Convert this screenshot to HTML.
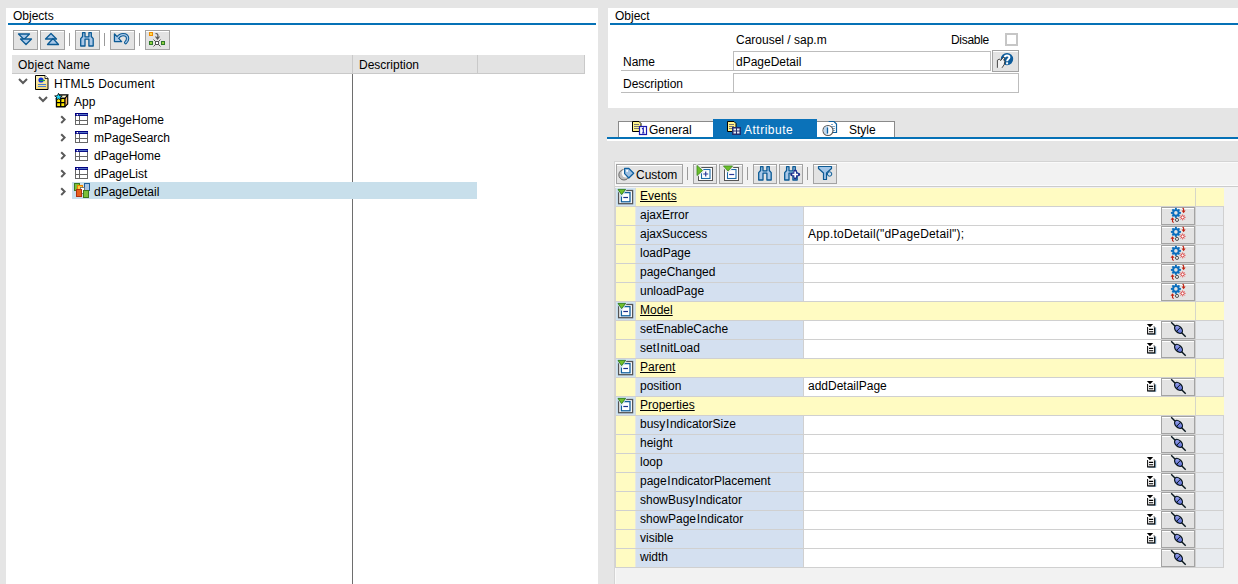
<!DOCTYPE html>
<html><head><meta charset="utf-8"><style>
html,body{margin:0;padding:0;}
body{width:1238px;height:584px;position:relative;overflow:hidden;background:#e5e5e5;font-family:"Liberation Sans",sans-serif;}
.t{position:absolute;font-size:12px;line-height:14px;white-space:nowrap;color:#000;}
.btn{position:absolute;background:#e3e3e3;border:1px solid #a3a3a3;box-shadow:inset 0 1px 0 #fff;}
svg{display:block;overflow:visible}
</style></head><body>
<div style="position:absolute;left:6px;top:8px;width:592px;height:576px;background:#fff"></div>
<div class="t" style="left:13px;top:9px;">Objects</div>
<div style="position:absolute;left:8px;top:23px;width:588px;height:2px;background:#0571b6"></div>
<div class="btn" style="left:13px;top:30px;width:23px;height:18px"><svg width="25" height="20" style="position:absolute;left:-1px;top:-1px"><g fill="#a9c8e8" stroke="#0b5a94" stroke-width="1.3" stroke-linejoin="round"><path d="M5.5 4 H16.5 L11 9.5 Z"/><path d="M7.5 9 H18.5 L13 14.5 Z"/></g></svg></div>
<div class="btn" style="left:40px;top:30px;width:23px;height:18px"><svg width="25" height="20" style="position:absolute;left:-1px;top:-1px"><g fill="#a9c8e8" stroke="#0b5a94" stroke-width="1.3" stroke-linejoin="round"><path d="M11 3.5 L16.5 9 H5.5 Z"/><path d="M13 8.5 L18.5 14.5 H7.5 Z"/></g></svg></div>
<div style="position:absolute;left:69px;top:33px;width:1px;height:13px;background:#9a9a9a"></div>
<div class="btn" style="left:75px;top:30px;width:23px;height:18px"><svg width="25" height="20" style="position:absolute;left:-1px;top:-1px"><path d="M7.6 2.7 H10 V6.8 H13.9 V2.7 H16.3 V6.5 L18.2 8.6 V16 H13.9 V9.2 H10 V16 H5.7 V8.6 L7.6 6.5 Z" fill="#a9c8e8" stroke="#0b5a94" stroke-width="1.3" stroke-linejoin="round"/></svg></div>
<div style="position:absolute;left:104px;top:33px;width:1px;height:13px;background:#9a9a9a"></div>
<div class="btn" style="left:110px;top:30px;width:23px;height:18px"><svg width="25" height="20" style="position:absolute;left:-1px;top:-1px"><path d="M7.5 8 C9.5 5 11.5 4.6 13 4.6 C16 4.6 17.6 6.2 17.6 8.5 C17.6 10.3 16.8 11.6 15.7 12.6" fill="none" stroke="#0b5a94" stroke-width="3.4" stroke-linecap="round"/><path d="M4.5 3.9 V11.6 H11.6 Z" fill="#a9c8e8" stroke="#0b5a94" stroke-width="1.4" stroke-linejoin="round"/><path d="M7.5 8 C9.5 5 11.5 4.6 13 4.6 C16 4.6 17.6 6.2 17.6 8.5 C17.6 10.3 16.8 11.6 15.7 12.6" fill="none" stroke="#a9c8e8" stroke-width="1.3" stroke-linecap="round"/><path d="M5.4 6 V10.8 H10 Z" fill="#a9c8e8"/></svg></div>
<div style="position:absolute;left:139px;top:33px;width:1px;height:13px;background:#9a9a9a"></div>
<div class="btn" style="left:145px;top:30px;width:23px;height:18px"><svg width="25" height="20" style="position:absolute;left:-1px;top:-1px"><rect x="4.5" y="2.5" width="3" height="3" fill="#ffd84a" stroke="#f08c00" stroke-width="1"/><path d="M10.5 3.5 C13 3.5 13.5 5 12.5 8" fill="none" stroke="#555" stroke-width="1.2"/><path d="M10.5 6.5 L12.5 9 L14.5 6.5" fill="none" stroke="#555" stroke-width="1.2"/><rect x="4.5" y="11.5" width="3" height="3" fill="#8fd13f" stroke="#2f7a2a" stroke-width="1"/><rect x="16.5" y="11.5" width="3" height="3" fill="#8fd13f" stroke="#2f7a2a" stroke-width="1"/><rect x="10.5" y="11.5" width="3" height="3" fill="#fff" stroke="#555" stroke-width="1"/><path d="M8.5 9.5 L10 11 M15.5 9.5 L14 11 M8.5 16.5 L10 15 M15.5 16.5 L14 15" stroke="#555" stroke-width="1"/></svg></div>
<div style="position:absolute;left:12px;top:55px;width:573px;height:18px;background:#e3e3e3"></div>
<div style="position:absolute;left:12px;top:73px;width:573px;height:1px;background:#c9c9c9"></div>
<div style="position:absolute;left:352px;top:55px;width:1px;height:18px;background:#c9c9c9"></div>
<div style="position:absolute;left:477px;top:55px;width:1px;height:18px;background:#c9c9c9"></div>
<div style="position:absolute;left:584px;top:55px;width:1px;height:19px;background:#c9c9c9"></div>
<div class="t" style="left:18px;top:58px;letter-spacing:0.2px">Object Name</div>
<div class="t" style="left:359px;top:58px;">Description</div>
<div style="position:absolute;left:352px;top:74px;width:1px;height:510px;background:#6e6e6e"></div>
<div style="position:absolute;left:72px;top:182px;width:405px;height:17px;background:#c8dfeb"></div>
<svg style="position:absolute;left:18px;top:78px" width="10" height="7"><path d="M1 1 L5 5 L9 1" fill="none" stroke="#5a5a5a" stroke-width="2"/></svg>
<div style="position:absolute;left:35px;top:75px;line-height:0"><svg width="14" height="16"><defs><linearGradient id="gy" x1="0" y1="0" x2="0" y2="1"><stop offset="0" stop-color="#fff6c0"/><stop offset="1" stop-color="#f3d77a"/></linearGradient></defs><path d="M0.5 0.5 H10 L13 3.5 V14.5 H0.5 Z" fill="url(#gy)" stroke="#000" stroke-width="1"/><path d="M10 0.5 V3.5 H13" fill="#fff" stroke="#000" stroke-width="0.8"/><circle cx="6" cy="5" r="2.6" fill="#1030e0"/><path d="M5 5.5 H10" stroke="#20a040" stroke-width="1.2"/><path d="M3 9.5 H11 M3 11.5 H11" stroke="#4a7fd0" stroke-width="1"/></svg></div>
<div class="t" style="left:54px;top:77px;letter-spacing:0.25px">HTML5 Document</div>
<svg style="position:absolute;left:38px;top:96px" width="10" height="7"><path d="M1 1 L5 5 L9 1" fill="none" stroke="#5a5a5a" stroke-width="2"/></svg>
<div style="position:absolute;left:54px;top:93px;line-height:0"><svg width="16" height="16"><path d="M2.5 5.4 L5.3 2 H13.7 V11 L10.9 13.7 H2.5 Z" fill="#f5b060" stroke="#000" stroke-width="1.1"/><path d="M2.5 5.4 L5.3 2 H13.7 L10.9 5.4 Z" fill="#fff8d0" stroke="#000" stroke-width="1.1"/><rect x="2.5" y="5.4" width="8.4" height="8.3" fill="#ffe800" stroke="#000" stroke-width="1.3"/><path d="M6.7 5.4 V13.7 M2.5 9.55 H10.9" stroke="#000" stroke-width="1.3"/><path d="M4.5 0.3 L5.6 2.7 L8.3 2.9 L6.2 4.6 L6.9 7.2 L4.5 5.8 L2.1 7.2 L2.8 4.6 L0.7 2.9 L3.4 2.7 Z" fill="#22d8f8" stroke="#000" stroke-width="0.8"/></svg></div>
<div class="t" style="left:74px;top:95px;">App</div>
<svg style="position:absolute;left:60px;top:115px" width="7" height="10"><path d="M1.2 1.2 L4.6 4.6 L1.2 8" fill="none" stroke="#5a5a5a" stroke-width="2"/></svg>
<div style="position:absolute;left:75px;top:113px;line-height:0"><svg width="13" height="12"><rect x="0.5" y="0.5" width="12" height="11" fill="#fff" stroke="#666" stroke-width="1"/><rect x="0" y="0" width="13" height="3" fill="#000080"/><rect x="4" y="1.2" width="8.5" height="0.9" fill="#6a90d8"/><rect x="1.6" y="1" width="1.6" height="1.3" fill="#fff"/><path d="M4.5 3 V11.5 M0.5 7.5 H12.5" stroke="#666" stroke-width="1"/></svg></div>
<div class="t" style="left:94px;top:113px;">mPageHome</div>
<svg style="position:absolute;left:60px;top:133px" width="7" height="10"><path d="M1.2 1.2 L4.6 4.6 L1.2 8" fill="none" stroke="#5a5a5a" stroke-width="2"/></svg>
<div style="position:absolute;left:75px;top:131px;line-height:0"><svg width="13" height="12"><rect x="0.5" y="0.5" width="12" height="11" fill="#fff" stroke="#666" stroke-width="1"/><rect x="0" y="0" width="13" height="3" fill="#000080"/><rect x="4" y="1.2" width="8.5" height="0.9" fill="#6a90d8"/><rect x="1.6" y="1" width="1.6" height="1.3" fill="#fff"/><path d="M4.5 3 V11.5 M0.5 7.5 H12.5" stroke="#666" stroke-width="1"/></svg></div>
<div class="t" style="left:94px;top:131px;">mPageSearch</div>
<svg style="position:absolute;left:60px;top:151px" width="7" height="10"><path d="M1.2 1.2 L4.6 4.6 L1.2 8" fill="none" stroke="#5a5a5a" stroke-width="2"/></svg>
<div style="position:absolute;left:75px;top:149px;line-height:0"><svg width="13" height="12"><rect x="0.5" y="0.5" width="12" height="11" fill="#fff" stroke="#666" stroke-width="1"/><rect x="0" y="0" width="13" height="3" fill="#000080"/><rect x="4" y="1.2" width="8.5" height="0.9" fill="#6a90d8"/><rect x="1.6" y="1" width="1.6" height="1.3" fill="#fff"/><path d="M4.5 3 V11.5 M0.5 7.5 H12.5" stroke="#666" stroke-width="1"/></svg></div>
<div class="t" style="left:94px;top:149px;">dPageHome</div>
<svg style="position:absolute;left:60px;top:169px" width="7" height="10"><path d="M1.2 1.2 L4.6 4.6 L1.2 8" fill="none" stroke="#5a5a5a" stroke-width="2"/></svg>
<div style="position:absolute;left:75px;top:167px;line-height:0"><svg width="13" height="12"><rect x="0.5" y="0.5" width="12" height="11" fill="#fff" stroke="#666" stroke-width="1"/><rect x="0" y="0" width="13" height="3" fill="#000080"/><rect x="4" y="1.2" width="8.5" height="0.9" fill="#6a90d8"/><rect x="1.6" y="1" width="1.6" height="1.3" fill="#fff"/><path d="M4.5 3 V11.5 M0.5 7.5 H12.5" stroke="#666" stroke-width="1"/></svg></div>
<div class="t" style="left:94px;top:167px;">dPageList</div>
<svg style="position:absolute;left:60px;top:187px" width="7" height="10"><path d="M1.2 1.2 L4.6 4.6 L1.2 8" fill="none" stroke="#5a5a5a" stroke-width="2"/></svg>
<div style="position:absolute;left:74px;top:183px;line-height:0"><svg width="17" height="16"><rect x="0.5" y="0.5" width="5" height="7" fill="#7cc03a" stroke="#3a7a20" stroke-width="1"/><rect x="10.5" y="0.5" width="5" height="7" fill="#a8c4e4" stroke="#1d5e9a" stroke-width="1"/><rect x="3.5" y="2.5" width="5" height="6" fill="#ffd040" stroke="#f08000" stroke-width="1"/><rect x="6.5" y="4.5" width="4" height="6" fill="#fff" stroke="#666" stroke-width="0.8"/><rect x="2.5" y="6.5" width="5" height="7" fill="#e8601c" stroke="#b03010" stroke-width="1"/><rect x="9.5" y="7.5" width="5" height="7" fill="#7cc03a" stroke="#3a7a20" stroke-width="1"/></svg></div>
<div class="t" style="left:94px;top:185px;">dPageDetail</div>
<div style="position:absolute;left:608px;top:8px;width:630px;height:100px;background:#fff"></div>
<div class="t" style="left:615px;top:9px;">Object</div>
<div style="position:absolute;left:610px;top:23px;width:628px;height:2px;background:#0571b6"></div>
<div class="t" style="left:736px;top:33px;">Carousel / sap.m</div>
<div class="t" style="left:951px;top:33px;letter-spacing:-0.3px">Disable</div>
<div style="position:absolute;left:1005px;top:33px;width:9px;height:9px;border:2px solid #c6c6c6;background:#fff"></div>
<div class="t" style="left:623px;top:55px;">Name</div>
<div style="position:absolute;left:621px;top:70px;width:112px;height:1px;background:#bcbcbc"></div>
<div style="position:absolute;left:733px;top:51px;width:256px;height:18px;border:1px solid #bdbdbd;background:#fff"></div>
<div class="t" style="left:736px;top:55px;">dPageDetail</div>
<div class="btn" style="left:992px;top:50px;width:25px;height:20px"><svg width="27" height="22" style="position:absolute;left:-1px;top:-1px"><circle cx="15" cy="9.1" r="6.2" fill="#0d5c9c"/><path d="M12.8 7.2 C12.8 4.9 17.4 4.7 17.4 7.2 C17.4 9 15.1 9 15.1 11.2" fill="none" stroke="#fff" stroke-width="2"/><rect x="14.1" y="12.3" width="2" height="2" fill="#fff"/><path d="M5.4 17.8 V10.2 L7.6 9 L8.6 10.6 L11.6 7 L12.6 8.3 L11.8 9.8 L12.8 11.6 L12.2 14.6 L10 17.8" fill="#f2f2f2" stroke="#333" stroke-width="0.9"/></svg></div>
<div class="t" style="left:623px;top:77px;">Description</div>
<div style="position:absolute;left:621px;top:92px;width:112px;height:1px;background:#bcbcbc"></div>
<div style="position:absolute;left:733px;top:73px;width:284px;height:18px;border:1px solid #bdbdbd;background:#fff"></div>
<div style="position:absolute;left:618px;top:121px;width:95px;height:16px;background:#fff;border-top:1px solid #8a8a8a;border-left:1px solid #8a8a8a;box-sizing:border-box"></div>
<div style="position:absolute;left:713px;top:119px;width:104px;height:18px;background:#0b72b9"></div>
<div style="position:absolute;left:817px;top:121px;width:78px;height:16px;background:#fff;border-top:1px solid #8a8a8a;border-right:1px solid #8a8a8a;box-sizing:border-box"></div>
<div style="position:absolute;left:607px;top:137px;width:631px;height:2px;background:#0571b6"></div>
<div style="position:absolute;left:607px;top:139px;width:631px;height:2px;background:#ffffff"></div>
<div style="position:absolute;left:632px;top:121px;line-height:0"><svg width="16" height="15"><path d="M0.5 0.5 H7 L9 2.5 V10.5 H0.5 Z" fill="#fff38a" stroke="#000" stroke-width="1"/><path d="M2 3.5 H7 M2 5.5 H7 M2 7.5 H7" stroke="#777" stroke-width="1"/><rect x="7.5" y="5.5" width="7" height="8" fill="#fff" stroke="#1a1ab0" stroke-width="1.2"/><path d="M10 8 L11.3 7 V12 M10 12 H12.5" stroke="#1a1ab0" stroke-width="1.1" fill="none"/></svg></div>
<div class="t" style="left:649px;top:123px;">General</div>
<div style="position:absolute;left:727px;top:121px;line-height:0"><svg width="15" height="15"><path d="M0.5 0.5 H7 L9 2.5 V10.5 H0.5 Z" fill="#fff38a" stroke="#000" stroke-width="1"/><path d="M2 3.5 H7 M2 5.5 H7 M2 7.5 H7" stroke="#777" stroke-width="1"/><rect x="5.5" y="6.5" width="8" height="7" fill="#1f2d6e" stroke="#1f2d6e" stroke-width="1"/><rect x="6.5" y="7.5" width="2.5" height="2" fill="#e8ecf4"/><rect x="10" y="7.5" width="2.5" height="2" fill="#e8ecf4"/><rect x="6.5" y="10.5" width="2.5" height="2" fill="#e8ecf4"/><rect x="10" y="10.5" width="2.5" height="2" fill="#e8ecf4"/></svg></div>
<div class="t" style="left:744px;top:123px;color:#fff;letter-spacing:0.5px">Attribute</div>
<div style="position:absolute;left:822px;top:121px;line-height:0"><svg width="17" height="16"><path d="M6.5 0.5 H12 L14.5 3 V11.5 H10" fill="#fff" stroke="#0d5f9e" stroke-width="1.2"/><path d="M9 3.5 H11 M10 5.5 H13 M10 7.5 H13 M10 9.5 H13" stroke="#6a9cc8" stroke-width="0.9"/><circle cx="6" cy="9.5" r="5" fill="#fff" stroke="#555" stroke-width="1.1"/><path d="M6 5 A4.5 4.5 0 0 0 6 14 Z" fill="#c0d8ee"/><path d="M5.5 6.5 V12.5" stroke="#0d5f9e" stroke-width="1.3"/></svg></div>
<div class="t" style="left:849px;top:123px;">Style</div>
<div style="position:absolute;left:614px;top:161px;width:624px;height:423px;background:#f2f2f2;border-top:1px solid #d4d4d4;border-left:1px solid #d4d4d4;box-sizing:border-box"></div>
<div style="position:absolute;left:615px;top:162px;width:623px;height:1px;background:#fafafa"></div>
<div style="position:absolute;left:615px;top:162px;width:1px;height:24px;background:#fafafa"></div>
<div style="position:absolute;left:615px;top:568px;width:1px;height:16px;background:#fafafa"></div>
<div style="position:absolute;left:615px;top:188px;width:1px;height:380px;background:#d2d2d2"></div>
<div class="btn" style="left:616px;top:164px;width:65px;height:18px"></div>
<div style="position:absolute;left:617px;top:167px;line-height:0"><svg width="22" height="16"><circle cx="7" cy="7.8" r="5.2" fill="#bdbdbd" stroke="#6a6a6a" stroke-width="1"/><circle cx="9" cy="6.1" r="4.4" fill="#f6f6f6"/><path d="M7.6 1.3 H11.6 L16.7 6.3 L11.8 11 L7.6 6.7 Z" fill="#9dc0e2" stroke="#0d5f9e" stroke-width="1.2" stroke-linejoin="round"/><rect x="9.2" y="3" width="1.8" height="1.8" fill="#fff"/></svg></div>
<div class="t" style="left:636px;top:168px;">Custom</div>
<div style="position:absolute;left:687px;top:167px;width:1px;height:13px;background:#9a9a9a"></div>
<div class="btn" style="left:693px;top:164px;width:22px;height:18px"><svg width="24" height="20" style="position:absolute;left:-1px;top:-1px"><rect x="5.5" y="3.5" width="14" height="13" fill="#fff" stroke="#555" stroke-width="1"/><rect x="8.5" y="5.5" width="8.5" height="9" fill="#fff" stroke="#1d6aa8" stroke-width="1.1"/><path d="M12.7 7.5 V12.5 M10.2 10 H15.2" stroke="#2a3a9a" stroke-width="1.2"/><path d="M4 1.5 L9.5 6.5 L4 11.5 Z" fill="#e3e3e3" stroke="#e3e3e3" stroke-width="3" stroke-linejoin="round"/><path d="M4 1.5 L9.5 6.5 L4 11.5 Z" fill="#6cbf2a" stroke="#3a8a1a" stroke-width="0.8"/></svg></div>
<div class="btn" style="left:719px;top:164px;width:22px;height:18px"><svg width="24" height="20" style="position:absolute;left:-1px;top:-1px"><rect x="5.5" y="3.5" width="14" height="13" fill="#fff" stroke="#555" stroke-width="1"/><rect x="8.5" y="5.5" width="8.5" height="9" fill="#fff" stroke="#1d6aa8" stroke-width="1.1"/><path d="M10.2 10.5 H15.2" stroke="#2a3a9a" stroke-width="1.2"/><path d="M4.5 2 H13.5 L9 7 Z" fill="#e3e3e3" stroke="#e3e3e3" stroke-width="3" stroke-linejoin="round"/><path d="M4.5 2 H13.5 L9 7 Z" fill="#6cbf2a" stroke="#3a8a1a" stroke-width="0.8"/></svg></div>
<div style="position:absolute;left:747px;top:167px;width:1px;height:13px;background:#9a9a9a"></div>
<div class="btn" style="left:753px;top:164px;width:22px;height:18px"><svg width="24" height="20" style="position:absolute;left:-1px;top:-1px"><path d="M7.6 2.7 H10 V6.8 H13.9 V2.7 H16.3 V6.5 L18.2 8.6 V16 H13.9 V9.2 H10 V16 H5.7 V8.6 L7.6 6.5 Z" fill="#a9c8e8" stroke="#0b5a94" stroke-width="1.3" stroke-linejoin="round"/></svg></div>
<div class="btn" style="left:779px;top:164px;width:22px;height:18px"><svg width="24" height="20" style="position:absolute;left:-1px;top:-1px"><path d="M7.6 2.7 H10 V6.8 H13.9 V2.7 H16.3 V6.5 L18.2 8.6 V16 H13.9 V9.2 H10 V16 H5.7 V8.6 L7.6 6.5 Z" fill="#a9c8e8" stroke="#0b5a94" stroke-width="1.3" stroke-linejoin="round"/><path d="M16.2 7.3 V13.7 M13 10.5 H19.4" stroke="#1a2a8a" stroke-width="3.6" stroke-linecap="round"/><path d="M16.2 7.6 V13.4 M13.3 10.5 H19.1" stroke="#fff" stroke-width="1.7"/></svg></div>
<div style="position:absolute;left:807px;top:167px;width:1px;height:13px;background:#9a9a9a"></div>
<div class="btn" style="left:813px;top:164px;width:22px;height:18px"><svg width="24" height="20" style="position:absolute;left:-1px;top:-1px"><path d="M5.5 2.5 H18.5 V4.5 L13.5 9 V15.5 H10.5 V9 L5.5 4.5 Z" fill="#a3c6e8" stroke="#0b5a94" stroke-width="1.2" stroke-linejoin="round"/><circle cx="16.6" cy="10" r="2.2" fill="#cfe0f0" stroke="#0b5a94" stroke-width="1"/></svg></div>
<div style="position:absolute;left:615px;top:185px;width:623px;height:1px;background:#fbfbfb"></div>
<div style="position:absolute;left:615px;top:186px;width:623px;height:1px;background:#cccccc"></div>
<div style="position:absolute;left:616px;top:188px;width:19px;height:18px;background:#cfe3f1"></div>
<div style="position:absolute;left:635px;top:188px;width:1px;height:18px;background:#d8dcd8"></div>
<div style="position:absolute;left:636px;top:188px;width:559px;height:18px;background:#fffbc2"></div>
<div style="position:absolute;left:1195px;top:188px;width:1px;height:18px;background:#d6d6c8"></div>
<div style="position:absolute;left:1196px;top:188px;width:28px;height:18px;background:#fffbc2"></div>
<div style="position:absolute;left:616px;top:206px;width:608px;height:1px;background:#d0d0d0"></div>
<div style="position:absolute;left:617px;top:189px;line-height:0"><svg width="18" height="17"><rect x="1.6" y="1.5" width="14" height="13.2" fill="#fff" stroke="#555" stroke-width="1.3"/><rect x="4.4" y="3.6" width="8.6" height="9.2" fill="#fff" stroke="#11609e" stroke-width="1.3"/><path d="M6.3 8.5 H11" stroke="#1a2f8a" stroke-width="1.2"/><path d="M-1 -1 H11 L4.5 8 Z" fill="#cfe3f1"/><path d="M1 0.4 H8.6 L4.6 5.6 Z" fill="#72c02a" stroke="#2e7a1a" stroke-width="0.9" stroke-linejoin="round"/></svg></div>
<div class="t" style="left:640px;top:189px;text-decoration:underline">Events</div>
<div style="position:absolute;left:616px;top:207px;width:19px;height:18px;background:#fffbc2"></div>
<div style="position:absolute;left:635px;top:207px;width:1px;height:18px;background:#e8e8e0"></div>
<div style="position:absolute;left:636px;top:207px;width:167px;height:18px;background:#d4e0f0"></div>
<div style="position:absolute;left:803px;top:207px;width:1px;height:18px;background:#d0d0d0"></div>
<div style="position:absolute;left:804px;top:207px;width:357px;height:18px;background:#fff"></div>
<div style="position:absolute;left:1195px;top:207px;width:1px;height:18px;background:#d0d0d0"></div>
<div style="position:absolute;left:1196px;top:207px;width:27px;height:18px;background:#e8ebef"></div>
<div style="position:absolute;left:1223px;top:207px;width:1px;height:19px;background:#d0d0d0"></div>
<div style="position:absolute;left:616px;top:225px;width:608px;height:1px;background:#d0d0d0"></div>
<div class="t" style="left:640px;top:208px;">ajaxError</div>
<div class="btn rb" style="left:1161px;top:207px;width:32px;height:16px"><svg width="34" height="18" style="position:absolute;left:-1px;top:-1px"><g transform="translate(14.9,5.9)"><circle r="2.75" fill="none" stroke="#0a6ebd" stroke-width="1.9"/><rect x="-0.95" y="-5" width="1.9" height="2" fill="#0a6ebd" transform="rotate(0)"/><rect x="-0.95" y="-5" width="1.9" height="2" fill="#0a6ebd" transform="rotate(45)"/><rect x="-0.95" y="-5" width="1.9" height="2" fill="#0a6ebd" transform="rotate(90)"/><rect x="-0.95" y="-5" width="1.9" height="2" fill="#0a6ebd" transform="rotate(135)"/><rect x="-0.95" y="-5" width="1.9" height="2" fill="#0a6ebd" transform="rotate(180)"/><rect x="-0.95" y="-5" width="1.9" height="2" fill="#0a6ebd" transform="rotate(225)"/><rect x="-0.95" y="-5" width="1.9" height="2" fill="#0a6ebd" transform="rotate(270)"/><rect x="-0.95" y="-5" width="1.9" height="2" fill="#0a6ebd" transform="rotate(315)"/></g><g transform="translate(21.6,10.4)"><circle r="1.6" fill="#fff" stroke="#d83030" stroke-width="1"/><path d="M0 -3 V-2 M0 2 V3 M-3 0 H-2 M2 0 H3 M-2.1 -2.1 L-1.5 -1.5 M2.1 2.1 L1.5 1.5 M-2.1 2.1 L-1.5 1.5 M2.1 -2.1 L1.5 -1.5" stroke="#e85050" stroke-width="0.9"/></g><circle cx="16" cy="12.9" r="1.6" fill="none" stroke="#555" stroke-width="1"/><path d="M21.6 0.8 L22.6 2 V4.5" fill="none" stroke="#c02010" stroke-width="1.1"/><path d="M20.6 3.6 L22.6 6.2 L24.6 3.6 Z" fill="#c02010"/><path d="M12.6 15.6 L11.5 14.5 V12" fill="none" stroke="#c02010" stroke-width="1.1"/><path d="M9.5 12.8 L11.5 10.2 L13.5 12.8 Z" fill="#c02010"/></svg></div>
<div style="position:absolute;left:616px;top:226px;width:19px;height:18px;background:#fffbc2"></div>
<div style="position:absolute;left:635px;top:226px;width:1px;height:18px;background:#e8e8e0"></div>
<div style="position:absolute;left:636px;top:226px;width:167px;height:18px;background:#d4e0f0"></div>
<div style="position:absolute;left:803px;top:226px;width:1px;height:18px;background:#d0d0d0"></div>
<div style="position:absolute;left:804px;top:226px;width:357px;height:18px;background:#fff"></div>
<div style="position:absolute;left:1195px;top:226px;width:1px;height:18px;background:#d0d0d0"></div>
<div style="position:absolute;left:1196px;top:226px;width:27px;height:18px;background:#e8ebef"></div>
<div style="position:absolute;left:1223px;top:226px;width:1px;height:19px;background:#d0d0d0"></div>
<div style="position:absolute;left:616px;top:244px;width:608px;height:1px;background:#d0d0d0"></div>
<div class="t" style="left:640px;top:227px;">ajaxSuccess</div>
<div class="t" style="left:808px;top:227px;letter-spacing:0.2px">App.toDetail("dPageDetail");</div>
<div class="btn rb" style="left:1161px;top:226px;width:32px;height:16px"><svg width="34" height="18" style="position:absolute;left:-1px;top:-1px"><g transform="translate(14.9,5.9)"><circle r="2.75" fill="none" stroke="#0a6ebd" stroke-width="1.9"/><rect x="-0.95" y="-5" width="1.9" height="2" fill="#0a6ebd" transform="rotate(0)"/><rect x="-0.95" y="-5" width="1.9" height="2" fill="#0a6ebd" transform="rotate(45)"/><rect x="-0.95" y="-5" width="1.9" height="2" fill="#0a6ebd" transform="rotate(90)"/><rect x="-0.95" y="-5" width="1.9" height="2" fill="#0a6ebd" transform="rotate(135)"/><rect x="-0.95" y="-5" width="1.9" height="2" fill="#0a6ebd" transform="rotate(180)"/><rect x="-0.95" y="-5" width="1.9" height="2" fill="#0a6ebd" transform="rotate(225)"/><rect x="-0.95" y="-5" width="1.9" height="2" fill="#0a6ebd" transform="rotate(270)"/><rect x="-0.95" y="-5" width="1.9" height="2" fill="#0a6ebd" transform="rotate(315)"/></g><g transform="translate(21.6,10.4)"><circle r="1.6" fill="#fff" stroke="#d83030" stroke-width="1"/><path d="M0 -3 V-2 M0 2 V3 M-3 0 H-2 M2 0 H3 M-2.1 -2.1 L-1.5 -1.5 M2.1 2.1 L1.5 1.5 M-2.1 2.1 L-1.5 1.5 M2.1 -2.1 L1.5 -1.5" stroke="#e85050" stroke-width="0.9"/></g><circle cx="16" cy="12.9" r="1.6" fill="none" stroke="#555" stroke-width="1"/><path d="M21.6 0.8 L22.6 2 V4.5" fill="none" stroke="#c02010" stroke-width="1.1"/><path d="M20.6 3.6 L22.6 6.2 L24.6 3.6 Z" fill="#c02010"/><path d="M12.6 15.6 L11.5 14.5 V12" fill="none" stroke="#c02010" stroke-width="1.1"/><path d="M9.5 12.8 L11.5 10.2 L13.5 12.8 Z" fill="#c02010"/></svg></div>
<div style="position:absolute;left:616px;top:245px;width:19px;height:18px;background:#fffbc2"></div>
<div style="position:absolute;left:635px;top:245px;width:1px;height:18px;background:#e8e8e0"></div>
<div style="position:absolute;left:636px;top:245px;width:167px;height:18px;background:#d4e0f0"></div>
<div style="position:absolute;left:803px;top:245px;width:1px;height:18px;background:#d0d0d0"></div>
<div style="position:absolute;left:804px;top:245px;width:357px;height:18px;background:#fff"></div>
<div style="position:absolute;left:1195px;top:245px;width:1px;height:18px;background:#d0d0d0"></div>
<div style="position:absolute;left:1196px;top:245px;width:27px;height:18px;background:#e8ebef"></div>
<div style="position:absolute;left:1223px;top:245px;width:1px;height:19px;background:#d0d0d0"></div>
<div style="position:absolute;left:616px;top:263px;width:608px;height:1px;background:#d0d0d0"></div>
<div class="t" style="left:640px;top:246px;">loadPage</div>
<div class="btn rb" style="left:1161px;top:245px;width:32px;height:16px"><svg width="34" height="18" style="position:absolute;left:-1px;top:-1px"><g transform="translate(14.9,5.9)"><circle r="2.75" fill="none" stroke="#0a6ebd" stroke-width="1.9"/><rect x="-0.95" y="-5" width="1.9" height="2" fill="#0a6ebd" transform="rotate(0)"/><rect x="-0.95" y="-5" width="1.9" height="2" fill="#0a6ebd" transform="rotate(45)"/><rect x="-0.95" y="-5" width="1.9" height="2" fill="#0a6ebd" transform="rotate(90)"/><rect x="-0.95" y="-5" width="1.9" height="2" fill="#0a6ebd" transform="rotate(135)"/><rect x="-0.95" y="-5" width="1.9" height="2" fill="#0a6ebd" transform="rotate(180)"/><rect x="-0.95" y="-5" width="1.9" height="2" fill="#0a6ebd" transform="rotate(225)"/><rect x="-0.95" y="-5" width="1.9" height="2" fill="#0a6ebd" transform="rotate(270)"/><rect x="-0.95" y="-5" width="1.9" height="2" fill="#0a6ebd" transform="rotate(315)"/></g><g transform="translate(21.6,10.4)"><circle r="1.6" fill="#fff" stroke="#d83030" stroke-width="1"/><path d="M0 -3 V-2 M0 2 V3 M-3 0 H-2 M2 0 H3 M-2.1 -2.1 L-1.5 -1.5 M2.1 2.1 L1.5 1.5 M-2.1 2.1 L-1.5 1.5 M2.1 -2.1 L1.5 -1.5" stroke="#e85050" stroke-width="0.9"/></g><circle cx="16" cy="12.9" r="1.6" fill="none" stroke="#555" stroke-width="1"/><path d="M21.6 0.8 L22.6 2 V4.5" fill="none" stroke="#c02010" stroke-width="1.1"/><path d="M20.6 3.6 L22.6 6.2 L24.6 3.6 Z" fill="#c02010"/><path d="M12.6 15.6 L11.5 14.5 V12" fill="none" stroke="#c02010" stroke-width="1.1"/><path d="M9.5 12.8 L11.5 10.2 L13.5 12.8 Z" fill="#c02010"/></svg></div>
<div style="position:absolute;left:616px;top:264px;width:19px;height:18px;background:#fffbc2"></div>
<div style="position:absolute;left:635px;top:264px;width:1px;height:18px;background:#e8e8e0"></div>
<div style="position:absolute;left:636px;top:264px;width:167px;height:18px;background:#d4e0f0"></div>
<div style="position:absolute;left:803px;top:264px;width:1px;height:18px;background:#d0d0d0"></div>
<div style="position:absolute;left:804px;top:264px;width:357px;height:18px;background:#fff"></div>
<div style="position:absolute;left:1195px;top:264px;width:1px;height:18px;background:#d0d0d0"></div>
<div style="position:absolute;left:1196px;top:264px;width:27px;height:18px;background:#e8ebef"></div>
<div style="position:absolute;left:1223px;top:264px;width:1px;height:19px;background:#d0d0d0"></div>
<div style="position:absolute;left:616px;top:282px;width:608px;height:1px;background:#d0d0d0"></div>
<div class="t" style="left:640px;top:265px;">pageChanged</div>
<div class="btn rb" style="left:1161px;top:264px;width:32px;height:16px"><svg width="34" height="18" style="position:absolute;left:-1px;top:-1px"><g transform="translate(14.9,5.9)"><circle r="2.75" fill="none" stroke="#0a6ebd" stroke-width="1.9"/><rect x="-0.95" y="-5" width="1.9" height="2" fill="#0a6ebd" transform="rotate(0)"/><rect x="-0.95" y="-5" width="1.9" height="2" fill="#0a6ebd" transform="rotate(45)"/><rect x="-0.95" y="-5" width="1.9" height="2" fill="#0a6ebd" transform="rotate(90)"/><rect x="-0.95" y="-5" width="1.9" height="2" fill="#0a6ebd" transform="rotate(135)"/><rect x="-0.95" y="-5" width="1.9" height="2" fill="#0a6ebd" transform="rotate(180)"/><rect x="-0.95" y="-5" width="1.9" height="2" fill="#0a6ebd" transform="rotate(225)"/><rect x="-0.95" y="-5" width="1.9" height="2" fill="#0a6ebd" transform="rotate(270)"/><rect x="-0.95" y="-5" width="1.9" height="2" fill="#0a6ebd" transform="rotate(315)"/></g><g transform="translate(21.6,10.4)"><circle r="1.6" fill="#fff" stroke="#d83030" stroke-width="1"/><path d="M0 -3 V-2 M0 2 V3 M-3 0 H-2 M2 0 H3 M-2.1 -2.1 L-1.5 -1.5 M2.1 2.1 L1.5 1.5 M-2.1 2.1 L-1.5 1.5 M2.1 -2.1 L1.5 -1.5" stroke="#e85050" stroke-width="0.9"/></g><circle cx="16" cy="12.9" r="1.6" fill="none" stroke="#555" stroke-width="1"/><path d="M21.6 0.8 L22.6 2 V4.5" fill="none" stroke="#c02010" stroke-width="1.1"/><path d="M20.6 3.6 L22.6 6.2 L24.6 3.6 Z" fill="#c02010"/><path d="M12.6 15.6 L11.5 14.5 V12" fill="none" stroke="#c02010" stroke-width="1.1"/><path d="M9.5 12.8 L11.5 10.2 L13.5 12.8 Z" fill="#c02010"/></svg></div>
<div style="position:absolute;left:616px;top:283px;width:19px;height:18px;background:#fffbc2"></div>
<div style="position:absolute;left:635px;top:283px;width:1px;height:18px;background:#e8e8e0"></div>
<div style="position:absolute;left:636px;top:283px;width:167px;height:18px;background:#d4e0f0"></div>
<div style="position:absolute;left:803px;top:283px;width:1px;height:18px;background:#d0d0d0"></div>
<div style="position:absolute;left:804px;top:283px;width:357px;height:18px;background:#fff"></div>
<div style="position:absolute;left:1195px;top:283px;width:1px;height:18px;background:#d0d0d0"></div>
<div style="position:absolute;left:1196px;top:283px;width:27px;height:18px;background:#e8ebef"></div>
<div style="position:absolute;left:1223px;top:283px;width:1px;height:19px;background:#d0d0d0"></div>
<div style="position:absolute;left:616px;top:301px;width:608px;height:1px;background:#d0d0d0"></div>
<div class="t" style="left:640px;top:284px;">unloadPage</div>
<div class="btn rb" style="left:1161px;top:283px;width:32px;height:16px"><svg width="34" height="18" style="position:absolute;left:-1px;top:-1px"><g transform="translate(14.9,5.9)"><circle r="2.75" fill="none" stroke="#0a6ebd" stroke-width="1.9"/><rect x="-0.95" y="-5" width="1.9" height="2" fill="#0a6ebd" transform="rotate(0)"/><rect x="-0.95" y="-5" width="1.9" height="2" fill="#0a6ebd" transform="rotate(45)"/><rect x="-0.95" y="-5" width="1.9" height="2" fill="#0a6ebd" transform="rotate(90)"/><rect x="-0.95" y="-5" width="1.9" height="2" fill="#0a6ebd" transform="rotate(135)"/><rect x="-0.95" y="-5" width="1.9" height="2" fill="#0a6ebd" transform="rotate(180)"/><rect x="-0.95" y="-5" width="1.9" height="2" fill="#0a6ebd" transform="rotate(225)"/><rect x="-0.95" y="-5" width="1.9" height="2" fill="#0a6ebd" transform="rotate(270)"/><rect x="-0.95" y="-5" width="1.9" height="2" fill="#0a6ebd" transform="rotate(315)"/></g><g transform="translate(21.6,10.4)"><circle r="1.6" fill="#fff" stroke="#d83030" stroke-width="1"/><path d="M0 -3 V-2 M0 2 V3 M-3 0 H-2 M2 0 H3 M-2.1 -2.1 L-1.5 -1.5 M2.1 2.1 L1.5 1.5 M-2.1 2.1 L-1.5 1.5 M2.1 -2.1 L1.5 -1.5" stroke="#e85050" stroke-width="0.9"/></g><circle cx="16" cy="12.9" r="1.6" fill="none" stroke="#555" stroke-width="1"/><path d="M21.6 0.8 L22.6 2 V4.5" fill="none" stroke="#c02010" stroke-width="1.1"/><path d="M20.6 3.6 L22.6 6.2 L24.6 3.6 Z" fill="#c02010"/><path d="M12.6 15.6 L11.5 14.5 V12" fill="none" stroke="#c02010" stroke-width="1.1"/><path d="M9.5 12.8 L11.5 10.2 L13.5 12.8 Z" fill="#c02010"/></svg></div>
<div style="position:absolute;left:616px;top:302px;width:19px;height:18px;background:#cfe3f1"></div>
<div style="position:absolute;left:635px;top:302px;width:1px;height:18px;background:#d8dcd8"></div>
<div style="position:absolute;left:636px;top:302px;width:559px;height:18px;background:#fffbc2"></div>
<div style="position:absolute;left:1195px;top:302px;width:1px;height:18px;background:#d6d6c8"></div>
<div style="position:absolute;left:1196px;top:302px;width:28px;height:18px;background:#fffbc2"></div>
<div style="position:absolute;left:616px;top:320px;width:608px;height:1px;background:#d0d0d0"></div>
<div style="position:absolute;left:617px;top:303px;line-height:0"><svg width="18" height="17"><rect x="1.6" y="1.5" width="14" height="13.2" fill="#fff" stroke="#555" stroke-width="1.3"/><rect x="4.4" y="3.6" width="8.6" height="9.2" fill="#fff" stroke="#11609e" stroke-width="1.3"/><path d="M6.3 8.5 H11" stroke="#1a2f8a" stroke-width="1.2"/><path d="M-1 -1 H11 L4.5 8 Z" fill="#cfe3f1"/><path d="M1 0.4 H8.6 L4.6 5.6 Z" fill="#72c02a" stroke="#2e7a1a" stroke-width="0.9" stroke-linejoin="round"/></svg></div>
<div class="t" style="left:640px;top:303px;text-decoration:underline">Model</div>
<div style="position:absolute;left:616px;top:321px;width:19px;height:18px;background:#fffbc2"></div>
<div style="position:absolute;left:635px;top:321px;width:1px;height:18px;background:#e8e8e0"></div>
<div style="position:absolute;left:636px;top:321px;width:167px;height:18px;background:#d4e0f0"></div>
<div style="position:absolute;left:803px;top:321px;width:1px;height:18px;background:#d0d0d0"></div>
<div style="position:absolute;left:804px;top:321px;width:357px;height:18px;background:#fff"></div>
<div style="position:absolute;left:1195px;top:321px;width:1px;height:18px;background:#d0d0d0"></div>
<div style="position:absolute;left:1196px;top:321px;width:27px;height:18px;background:#e8ebef"></div>
<div style="position:absolute;left:1223px;top:321px;width:1px;height:19px;background:#d0d0d0"></div>
<div style="position:absolute;left:616px;top:339px;width:608px;height:1px;background:#d0d0d0"></div>
<div class="t" style="left:640px;top:322px;">setEnableCache</div>
<div style="position:absolute;left:1146px;top:324px;line-height:0"><svg width="11" height="12"><rect x="2.6" y="3.4" width="7.6" height="7.4" fill="#7aa0bc"/><path d="M1.6 3 V9.9 H8.6 V3.6 L7.8 2.6" fill="#fff" stroke="#111" stroke-width="1.1"/><rect x="2.1" y="2.6" width="6" height="1" fill="#fff"/><path d="M7.3 2.4 L8.6 3.8" stroke="#999" stroke-width="0.8"/><path d="M0.8 0 H7.2 L4 3.2 Z" fill="#000"/><path d="M3 5.4 H7.2 M3 7.7 H7.2" stroke="#000" stroke-width="1.1"/></svg></div>
<div class="btn rb" style="left:1161px;top:321px;width:32px;height:16px"><svg width="34" height="18" style="position:absolute;left:-1px;top:-1px"><defs><linearGradient id="bg1" x1="0" y1="0" x2="1" y2="1"><stop offset="0" stop-color="#a8b0f0"/><stop offset="1" stop-color="#4a5cd0"/></linearGradient></defs><path d="M10.2 1.2 L24.7 15.8" stroke="#08161e" stroke-width="1.4"/><ellipse cx="17.5" cy="8.4" rx="4.7" ry="3" transform="rotate(45 17.5 8.4)" fill="url(#bg1)" stroke="#08161e" stroke-width="1.2"/><path d="M15.6 10.4 L19.4 6.4" stroke="#08161e" stroke-width="1"/></svg></div>
<div style="position:absolute;left:616px;top:340px;width:19px;height:18px;background:#fffbc2"></div>
<div style="position:absolute;left:635px;top:340px;width:1px;height:18px;background:#e8e8e0"></div>
<div style="position:absolute;left:636px;top:340px;width:167px;height:18px;background:#d4e0f0"></div>
<div style="position:absolute;left:803px;top:340px;width:1px;height:18px;background:#d0d0d0"></div>
<div style="position:absolute;left:804px;top:340px;width:357px;height:18px;background:#fff"></div>
<div style="position:absolute;left:1195px;top:340px;width:1px;height:18px;background:#d0d0d0"></div>
<div style="position:absolute;left:1196px;top:340px;width:27px;height:18px;background:#e8ebef"></div>
<div style="position:absolute;left:1223px;top:340px;width:1px;height:19px;background:#d0d0d0"></div>
<div style="position:absolute;left:616px;top:358px;width:608px;height:1px;background:#d0d0d0"></div>
<div class="t" style="left:640px;top:341px;">set<span style="margin:0 0.6px">I</span>nitLoad</div>
<div style="position:absolute;left:1146px;top:343px;line-height:0"><svg width="11" height="12"><rect x="2.6" y="3.4" width="7.6" height="7.4" fill="#7aa0bc"/><path d="M1.6 3 V9.9 H8.6 V3.6 L7.8 2.6" fill="#fff" stroke="#111" stroke-width="1.1"/><rect x="2.1" y="2.6" width="6" height="1" fill="#fff"/><path d="M7.3 2.4 L8.6 3.8" stroke="#999" stroke-width="0.8"/><path d="M0.8 0 H7.2 L4 3.2 Z" fill="#000"/><path d="M3 5.4 H7.2 M3 7.7 H7.2" stroke="#000" stroke-width="1.1"/></svg></div>
<div class="btn rb" style="left:1161px;top:340px;width:32px;height:16px"><svg width="34" height="18" style="position:absolute;left:-1px;top:-1px"><defs><linearGradient id="bg1" x1="0" y1="0" x2="1" y2="1"><stop offset="0" stop-color="#a8b0f0"/><stop offset="1" stop-color="#4a5cd0"/></linearGradient></defs><path d="M10.2 1.2 L24.7 15.8" stroke="#08161e" stroke-width="1.4"/><ellipse cx="17.5" cy="8.4" rx="4.7" ry="3" transform="rotate(45 17.5 8.4)" fill="url(#bg1)" stroke="#08161e" stroke-width="1.2"/><path d="M15.6 10.4 L19.4 6.4" stroke="#08161e" stroke-width="1"/></svg></div>
<div style="position:absolute;left:616px;top:359px;width:19px;height:18px;background:#cfe3f1"></div>
<div style="position:absolute;left:635px;top:359px;width:1px;height:18px;background:#d8dcd8"></div>
<div style="position:absolute;left:636px;top:359px;width:559px;height:18px;background:#fffbc2"></div>
<div style="position:absolute;left:1195px;top:359px;width:1px;height:18px;background:#d6d6c8"></div>
<div style="position:absolute;left:1196px;top:359px;width:28px;height:18px;background:#fffbc2"></div>
<div style="position:absolute;left:616px;top:377px;width:608px;height:1px;background:#d0d0d0"></div>
<div style="position:absolute;left:617px;top:360px;line-height:0"><svg width="18" height="17"><rect x="1.6" y="1.5" width="14" height="13.2" fill="#fff" stroke="#555" stroke-width="1.3"/><rect x="4.4" y="3.6" width="8.6" height="9.2" fill="#fff" stroke="#11609e" stroke-width="1.3"/><path d="M6.3 8.5 H11" stroke="#1a2f8a" stroke-width="1.2"/><path d="M-1 -1 H11 L4.5 8 Z" fill="#cfe3f1"/><path d="M1 0.4 H8.6 L4.6 5.6 Z" fill="#72c02a" stroke="#2e7a1a" stroke-width="0.9" stroke-linejoin="round"/></svg></div>
<div class="t" style="left:640px;top:360px;text-decoration:underline">Parent</div>
<div style="position:absolute;left:616px;top:378px;width:19px;height:18px;background:#fffbc2"></div>
<div style="position:absolute;left:635px;top:378px;width:1px;height:18px;background:#e8e8e0"></div>
<div style="position:absolute;left:636px;top:378px;width:167px;height:18px;background:#d4e0f0"></div>
<div style="position:absolute;left:803px;top:378px;width:1px;height:18px;background:#d0d0d0"></div>
<div style="position:absolute;left:804px;top:378px;width:357px;height:18px;background:#fff"></div>
<div style="position:absolute;left:1195px;top:378px;width:1px;height:18px;background:#d0d0d0"></div>
<div style="position:absolute;left:1196px;top:378px;width:27px;height:18px;background:#e8ebef"></div>
<div style="position:absolute;left:1223px;top:378px;width:1px;height:19px;background:#d0d0d0"></div>
<div style="position:absolute;left:616px;top:396px;width:608px;height:1px;background:#d0d0d0"></div>
<div class="t" style="left:640px;top:379px;">position</div>
<div class="t" style="left:808px;top:379px;">addDetailPage</div>
<div style="position:absolute;left:1146px;top:381px;line-height:0"><svg width="11" height="12"><rect x="2.6" y="3.4" width="7.6" height="7.4" fill="#7aa0bc"/><path d="M1.6 3 V9.9 H8.6 V3.6 L7.8 2.6" fill="#fff" stroke="#111" stroke-width="1.1"/><rect x="2.1" y="2.6" width="6" height="1" fill="#fff"/><path d="M7.3 2.4 L8.6 3.8" stroke="#999" stroke-width="0.8"/><path d="M0.8 0 H7.2 L4 3.2 Z" fill="#000"/><path d="M3 5.4 H7.2 M3 7.7 H7.2" stroke="#000" stroke-width="1.1"/></svg></div>
<div class="btn rb" style="left:1161px;top:378px;width:32px;height:16px"><svg width="34" height="18" style="position:absolute;left:-1px;top:-1px"><defs><linearGradient id="bg1" x1="0" y1="0" x2="1" y2="1"><stop offset="0" stop-color="#a8b0f0"/><stop offset="1" stop-color="#4a5cd0"/></linearGradient></defs><path d="M10.2 1.2 L24.7 15.8" stroke="#08161e" stroke-width="1.4"/><ellipse cx="17.5" cy="8.4" rx="4.7" ry="3" transform="rotate(45 17.5 8.4)" fill="url(#bg1)" stroke="#08161e" stroke-width="1.2"/><path d="M15.6 10.4 L19.4 6.4" stroke="#08161e" stroke-width="1"/></svg></div>
<div style="position:absolute;left:616px;top:397px;width:19px;height:18px;background:#cfe3f1"></div>
<div style="position:absolute;left:635px;top:397px;width:1px;height:18px;background:#d8dcd8"></div>
<div style="position:absolute;left:636px;top:397px;width:559px;height:18px;background:#fffbc2"></div>
<div style="position:absolute;left:1195px;top:397px;width:1px;height:18px;background:#d6d6c8"></div>
<div style="position:absolute;left:1196px;top:397px;width:28px;height:18px;background:#fffbc2"></div>
<div style="position:absolute;left:616px;top:415px;width:608px;height:1px;background:#d0d0d0"></div>
<div style="position:absolute;left:617px;top:398px;line-height:0"><svg width="18" height="17"><rect x="1.6" y="1.5" width="14" height="13.2" fill="#fff" stroke="#555" stroke-width="1.3"/><rect x="4.4" y="3.6" width="8.6" height="9.2" fill="#fff" stroke="#11609e" stroke-width="1.3"/><path d="M6.3 8.5 H11" stroke="#1a2f8a" stroke-width="1.2"/><path d="M-1 -1 H11 L4.5 8 Z" fill="#cfe3f1"/><path d="M1 0.4 H8.6 L4.6 5.6 Z" fill="#72c02a" stroke="#2e7a1a" stroke-width="0.9" stroke-linejoin="round"/></svg></div>
<div class="t" style="left:640px;top:398px;text-decoration:underline">Properties</div>
<div style="position:absolute;left:616px;top:416px;width:19px;height:18px;background:#fffbc2"></div>
<div style="position:absolute;left:635px;top:416px;width:1px;height:18px;background:#e8e8e0"></div>
<div style="position:absolute;left:636px;top:416px;width:167px;height:18px;background:#d4e0f0"></div>
<div style="position:absolute;left:803px;top:416px;width:1px;height:18px;background:#d0d0d0"></div>
<div style="position:absolute;left:804px;top:416px;width:357px;height:18px;background:#fff"></div>
<div style="position:absolute;left:1195px;top:416px;width:1px;height:18px;background:#d0d0d0"></div>
<div style="position:absolute;left:1196px;top:416px;width:27px;height:18px;background:#e8ebef"></div>
<div style="position:absolute;left:1223px;top:416px;width:1px;height:19px;background:#d0d0d0"></div>
<div style="position:absolute;left:616px;top:434px;width:608px;height:1px;background:#d0d0d0"></div>
<div class="t" style="left:640px;top:417px;">busy<span style="margin:0 0.6px">I</span>ndicatorSize</div>
<div class="btn rb" style="left:1161px;top:416px;width:32px;height:16px"><svg width="34" height="18" style="position:absolute;left:-1px;top:-1px"><defs><linearGradient id="bg1" x1="0" y1="0" x2="1" y2="1"><stop offset="0" stop-color="#a8b0f0"/><stop offset="1" stop-color="#4a5cd0"/></linearGradient></defs><path d="M10.2 1.2 L24.7 15.8" stroke="#08161e" stroke-width="1.4"/><ellipse cx="17.5" cy="8.4" rx="4.7" ry="3" transform="rotate(45 17.5 8.4)" fill="url(#bg1)" stroke="#08161e" stroke-width="1.2"/><path d="M15.6 10.4 L19.4 6.4" stroke="#08161e" stroke-width="1"/></svg></div>
<div style="position:absolute;left:616px;top:435px;width:19px;height:18px;background:#fffbc2"></div>
<div style="position:absolute;left:635px;top:435px;width:1px;height:18px;background:#e8e8e0"></div>
<div style="position:absolute;left:636px;top:435px;width:167px;height:18px;background:#d4e0f0"></div>
<div style="position:absolute;left:803px;top:435px;width:1px;height:18px;background:#d0d0d0"></div>
<div style="position:absolute;left:804px;top:435px;width:357px;height:18px;background:#fff"></div>
<div style="position:absolute;left:1195px;top:435px;width:1px;height:18px;background:#d0d0d0"></div>
<div style="position:absolute;left:1196px;top:435px;width:27px;height:18px;background:#e8ebef"></div>
<div style="position:absolute;left:1223px;top:435px;width:1px;height:19px;background:#d0d0d0"></div>
<div style="position:absolute;left:616px;top:453px;width:608px;height:1px;background:#d0d0d0"></div>
<div class="t" style="left:640px;top:436px;">height</div>
<div class="btn rb" style="left:1161px;top:435px;width:32px;height:16px"><svg width="34" height="18" style="position:absolute;left:-1px;top:-1px"><defs><linearGradient id="bg1" x1="0" y1="0" x2="1" y2="1"><stop offset="0" stop-color="#a8b0f0"/><stop offset="1" stop-color="#4a5cd0"/></linearGradient></defs><path d="M10.2 1.2 L24.7 15.8" stroke="#08161e" stroke-width="1.4"/><ellipse cx="17.5" cy="8.4" rx="4.7" ry="3" transform="rotate(45 17.5 8.4)" fill="url(#bg1)" stroke="#08161e" stroke-width="1.2"/><path d="M15.6 10.4 L19.4 6.4" stroke="#08161e" stroke-width="1"/></svg></div>
<div style="position:absolute;left:616px;top:454px;width:19px;height:18px;background:#fffbc2"></div>
<div style="position:absolute;left:635px;top:454px;width:1px;height:18px;background:#e8e8e0"></div>
<div style="position:absolute;left:636px;top:454px;width:167px;height:18px;background:#d4e0f0"></div>
<div style="position:absolute;left:803px;top:454px;width:1px;height:18px;background:#d0d0d0"></div>
<div style="position:absolute;left:804px;top:454px;width:357px;height:18px;background:#fff"></div>
<div style="position:absolute;left:1195px;top:454px;width:1px;height:18px;background:#d0d0d0"></div>
<div style="position:absolute;left:1196px;top:454px;width:27px;height:18px;background:#e8ebef"></div>
<div style="position:absolute;left:1223px;top:454px;width:1px;height:19px;background:#d0d0d0"></div>
<div style="position:absolute;left:616px;top:472px;width:608px;height:1px;background:#d0d0d0"></div>
<div class="t" style="left:640px;top:455px;">loop</div>
<div style="position:absolute;left:1146px;top:457px;line-height:0"><svg width="11" height="12"><rect x="2.6" y="3.4" width="7.6" height="7.4" fill="#7aa0bc"/><path d="M1.6 3 V9.9 H8.6 V3.6 L7.8 2.6" fill="#fff" stroke="#111" stroke-width="1.1"/><rect x="2.1" y="2.6" width="6" height="1" fill="#fff"/><path d="M7.3 2.4 L8.6 3.8" stroke="#999" stroke-width="0.8"/><path d="M0.8 0 H7.2 L4 3.2 Z" fill="#000"/><path d="M3 5.4 H7.2 M3 7.7 H7.2" stroke="#000" stroke-width="1.1"/></svg></div>
<div class="btn rb" style="left:1161px;top:454px;width:32px;height:16px"><svg width="34" height="18" style="position:absolute;left:-1px;top:-1px"><defs><linearGradient id="bg1" x1="0" y1="0" x2="1" y2="1"><stop offset="0" stop-color="#a8b0f0"/><stop offset="1" stop-color="#4a5cd0"/></linearGradient></defs><path d="M10.2 1.2 L24.7 15.8" stroke="#08161e" stroke-width="1.4"/><ellipse cx="17.5" cy="8.4" rx="4.7" ry="3" transform="rotate(45 17.5 8.4)" fill="url(#bg1)" stroke="#08161e" stroke-width="1.2"/><path d="M15.6 10.4 L19.4 6.4" stroke="#08161e" stroke-width="1"/></svg></div>
<div style="position:absolute;left:616px;top:473px;width:19px;height:18px;background:#fffbc2"></div>
<div style="position:absolute;left:635px;top:473px;width:1px;height:18px;background:#e8e8e0"></div>
<div style="position:absolute;left:636px;top:473px;width:167px;height:18px;background:#d4e0f0"></div>
<div style="position:absolute;left:803px;top:473px;width:1px;height:18px;background:#d0d0d0"></div>
<div style="position:absolute;left:804px;top:473px;width:357px;height:18px;background:#fff"></div>
<div style="position:absolute;left:1195px;top:473px;width:1px;height:18px;background:#d0d0d0"></div>
<div style="position:absolute;left:1196px;top:473px;width:27px;height:18px;background:#e8ebef"></div>
<div style="position:absolute;left:1223px;top:473px;width:1px;height:19px;background:#d0d0d0"></div>
<div style="position:absolute;left:616px;top:491px;width:608px;height:1px;background:#d0d0d0"></div>
<div class="t" style="left:640px;top:474px;">page<span style="margin:0 0.6px">I</span>ndicatorPlacement</div>
<div style="position:absolute;left:1146px;top:476px;line-height:0"><svg width="11" height="12"><rect x="2.6" y="3.4" width="7.6" height="7.4" fill="#7aa0bc"/><path d="M1.6 3 V9.9 H8.6 V3.6 L7.8 2.6" fill="#fff" stroke="#111" stroke-width="1.1"/><rect x="2.1" y="2.6" width="6" height="1" fill="#fff"/><path d="M7.3 2.4 L8.6 3.8" stroke="#999" stroke-width="0.8"/><path d="M0.8 0 H7.2 L4 3.2 Z" fill="#000"/><path d="M3 5.4 H7.2 M3 7.7 H7.2" stroke="#000" stroke-width="1.1"/></svg></div>
<div class="btn rb" style="left:1161px;top:473px;width:32px;height:16px"><svg width="34" height="18" style="position:absolute;left:-1px;top:-1px"><defs><linearGradient id="bg1" x1="0" y1="0" x2="1" y2="1"><stop offset="0" stop-color="#a8b0f0"/><stop offset="1" stop-color="#4a5cd0"/></linearGradient></defs><path d="M10.2 1.2 L24.7 15.8" stroke="#08161e" stroke-width="1.4"/><ellipse cx="17.5" cy="8.4" rx="4.7" ry="3" transform="rotate(45 17.5 8.4)" fill="url(#bg1)" stroke="#08161e" stroke-width="1.2"/><path d="M15.6 10.4 L19.4 6.4" stroke="#08161e" stroke-width="1"/></svg></div>
<div style="position:absolute;left:616px;top:492px;width:19px;height:18px;background:#fffbc2"></div>
<div style="position:absolute;left:635px;top:492px;width:1px;height:18px;background:#e8e8e0"></div>
<div style="position:absolute;left:636px;top:492px;width:167px;height:18px;background:#d4e0f0"></div>
<div style="position:absolute;left:803px;top:492px;width:1px;height:18px;background:#d0d0d0"></div>
<div style="position:absolute;left:804px;top:492px;width:357px;height:18px;background:#fff"></div>
<div style="position:absolute;left:1195px;top:492px;width:1px;height:18px;background:#d0d0d0"></div>
<div style="position:absolute;left:1196px;top:492px;width:27px;height:18px;background:#e8ebef"></div>
<div style="position:absolute;left:1223px;top:492px;width:1px;height:19px;background:#d0d0d0"></div>
<div style="position:absolute;left:616px;top:510px;width:608px;height:1px;background:#d0d0d0"></div>
<div class="t" style="left:640px;top:493px;">showBusy<span style="margin:0 0.6px">I</span>ndicator</div>
<div style="position:absolute;left:1146px;top:495px;line-height:0"><svg width="11" height="12"><rect x="2.6" y="3.4" width="7.6" height="7.4" fill="#7aa0bc"/><path d="M1.6 3 V9.9 H8.6 V3.6 L7.8 2.6" fill="#fff" stroke="#111" stroke-width="1.1"/><rect x="2.1" y="2.6" width="6" height="1" fill="#fff"/><path d="M7.3 2.4 L8.6 3.8" stroke="#999" stroke-width="0.8"/><path d="M0.8 0 H7.2 L4 3.2 Z" fill="#000"/><path d="M3 5.4 H7.2 M3 7.7 H7.2" stroke="#000" stroke-width="1.1"/></svg></div>
<div class="btn rb" style="left:1161px;top:492px;width:32px;height:16px"><svg width="34" height="18" style="position:absolute;left:-1px;top:-1px"><defs><linearGradient id="bg1" x1="0" y1="0" x2="1" y2="1"><stop offset="0" stop-color="#a8b0f0"/><stop offset="1" stop-color="#4a5cd0"/></linearGradient></defs><path d="M10.2 1.2 L24.7 15.8" stroke="#08161e" stroke-width="1.4"/><ellipse cx="17.5" cy="8.4" rx="4.7" ry="3" transform="rotate(45 17.5 8.4)" fill="url(#bg1)" stroke="#08161e" stroke-width="1.2"/><path d="M15.6 10.4 L19.4 6.4" stroke="#08161e" stroke-width="1"/></svg></div>
<div style="position:absolute;left:616px;top:511px;width:19px;height:18px;background:#fffbc2"></div>
<div style="position:absolute;left:635px;top:511px;width:1px;height:18px;background:#e8e8e0"></div>
<div style="position:absolute;left:636px;top:511px;width:167px;height:18px;background:#d4e0f0"></div>
<div style="position:absolute;left:803px;top:511px;width:1px;height:18px;background:#d0d0d0"></div>
<div style="position:absolute;left:804px;top:511px;width:357px;height:18px;background:#fff"></div>
<div style="position:absolute;left:1195px;top:511px;width:1px;height:18px;background:#d0d0d0"></div>
<div style="position:absolute;left:1196px;top:511px;width:27px;height:18px;background:#e8ebef"></div>
<div style="position:absolute;left:1223px;top:511px;width:1px;height:19px;background:#d0d0d0"></div>
<div style="position:absolute;left:616px;top:529px;width:608px;height:1px;background:#d0d0d0"></div>
<div class="t" style="left:640px;top:512px;">showPage<span style="margin:0 0.6px">I</span>ndicator</div>
<div style="position:absolute;left:1146px;top:514px;line-height:0"><svg width="11" height="12"><rect x="2.6" y="3.4" width="7.6" height="7.4" fill="#7aa0bc"/><path d="M1.6 3 V9.9 H8.6 V3.6 L7.8 2.6" fill="#fff" stroke="#111" stroke-width="1.1"/><rect x="2.1" y="2.6" width="6" height="1" fill="#fff"/><path d="M7.3 2.4 L8.6 3.8" stroke="#999" stroke-width="0.8"/><path d="M0.8 0 H7.2 L4 3.2 Z" fill="#000"/><path d="M3 5.4 H7.2 M3 7.7 H7.2" stroke="#000" stroke-width="1.1"/></svg></div>
<div class="btn rb" style="left:1161px;top:511px;width:32px;height:16px"><svg width="34" height="18" style="position:absolute;left:-1px;top:-1px"><defs><linearGradient id="bg1" x1="0" y1="0" x2="1" y2="1"><stop offset="0" stop-color="#a8b0f0"/><stop offset="1" stop-color="#4a5cd0"/></linearGradient></defs><path d="M10.2 1.2 L24.7 15.8" stroke="#08161e" stroke-width="1.4"/><ellipse cx="17.5" cy="8.4" rx="4.7" ry="3" transform="rotate(45 17.5 8.4)" fill="url(#bg1)" stroke="#08161e" stroke-width="1.2"/><path d="M15.6 10.4 L19.4 6.4" stroke="#08161e" stroke-width="1"/></svg></div>
<div style="position:absolute;left:616px;top:530px;width:19px;height:18px;background:#fffbc2"></div>
<div style="position:absolute;left:635px;top:530px;width:1px;height:18px;background:#e8e8e0"></div>
<div style="position:absolute;left:636px;top:530px;width:167px;height:18px;background:#d4e0f0"></div>
<div style="position:absolute;left:803px;top:530px;width:1px;height:18px;background:#d0d0d0"></div>
<div style="position:absolute;left:804px;top:530px;width:357px;height:18px;background:#fff"></div>
<div style="position:absolute;left:1195px;top:530px;width:1px;height:18px;background:#d0d0d0"></div>
<div style="position:absolute;left:1196px;top:530px;width:27px;height:18px;background:#e8ebef"></div>
<div style="position:absolute;left:1223px;top:530px;width:1px;height:19px;background:#d0d0d0"></div>
<div style="position:absolute;left:616px;top:548px;width:608px;height:1px;background:#d0d0d0"></div>
<div class="t" style="left:640px;top:531px;">visible</div>
<div style="position:absolute;left:1146px;top:533px;line-height:0"><svg width="11" height="12"><rect x="2.6" y="3.4" width="7.6" height="7.4" fill="#7aa0bc"/><path d="M1.6 3 V9.9 H8.6 V3.6 L7.8 2.6" fill="#fff" stroke="#111" stroke-width="1.1"/><rect x="2.1" y="2.6" width="6" height="1" fill="#fff"/><path d="M7.3 2.4 L8.6 3.8" stroke="#999" stroke-width="0.8"/><path d="M0.8 0 H7.2 L4 3.2 Z" fill="#000"/><path d="M3 5.4 H7.2 M3 7.7 H7.2" stroke="#000" stroke-width="1.1"/></svg></div>
<div class="btn rb" style="left:1161px;top:530px;width:32px;height:16px"><svg width="34" height="18" style="position:absolute;left:-1px;top:-1px"><defs><linearGradient id="bg1" x1="0" y1="0" x2="1" y2="1"><stop offset="0" stop-color="#a8b0f0"/><stop offset="1" stop-color="#4a5cd0"/></linearGradient></defs><path d="M10.2 1.2 L24.7 15.8" stroke="#08161e" stroke-width="1.4"/><ellipse cx="17.5" cy="8.4" rx="4.7" ry="3" transform="rotate(45 17.5 8.4)" fill="url(#bg1)" stroke="#08161e" stroke-width="1.2"/><path d="M15.6 10.4 L19.4 6.4" stroke="#08161e" stroke-width="1"/></svg></div>
<div style="position:absolute;left:616px;top:549px;width:19px;height:18px;background:#fffbc2"></div>
<div style="position:absolute;left:635px;top:549px;width:1px;height:18px;background:#e8e8e0"></div>
<div style="position:absolute;left:636px;top:549px;width:167px;height:18px;background:#d4e0f0"></div>
<div style="position:absolute;left:803px;top:549px;width:1px;height:18px;background:#d0d0d0"></div>
<div style="position:absolute;left:804px;top:549px;width:357px;height:18px;background:#fff"></div>
<div style="position:absolute;left:1195px;top:549px;width:1px;height:18px;background:#d0d0d0"></div>
<div style="position:absolute;left:1196px;top:549px;width:27px;height:18px;background:#e8ebef"></div>
<div style="position:absolute;left:1223px;top:549px;width:1px;height:19px;background:#d0d0d0"></div>
<div style="position:absolute;left:616px;top:567px;width:608px;height:1px;background:#d0d0d0"></div>
<div class="t" style="left:640px;top:550px;">width</div>
<div class="btn rb" style="left:1161px;top:549px;width:32px;height:16px"><svg width="34" height="18" style="position:absolute;left:-1px;top:-1px"><defs><linearGradient id="bg1" x1="0" y1="0" x2="1" y2="1"><stop offset="0" stop-color="#a8b0f0"/><stop offset="1" stop-color="#4a5cd0"/></linearGradient></defs><path d="M10.2 1.2 L24.7 15.8" stroke="#08161e" stroke-width="1.4"/><ellipse cx="17.5" cy="8.4" rx="4.7" ry="3" transform="rotate(45 17.5 8.4)" fill="url(#bg1)" stroke="#08161e" stroke-width="1.2"/><path d="M15.6 10.4 L19.4 6.4" stroke="#08161e" stroke-width="1"/></svg></div>
</body></html>
